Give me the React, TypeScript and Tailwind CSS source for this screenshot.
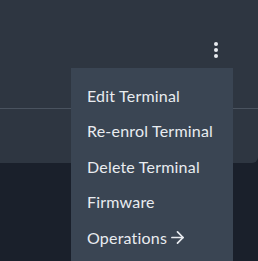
import { ArrowRight } from "lucide-react";

const items = ["Edit Terminal", "Re-enrol Terminal", "Delete Terminal", "Firmware"];

export default function App() {
  return (
    <div className="relative w-[258px] h-[261px] overflow-hidden bg-[#1a202b] font-['Lato',sans-serif]">
      <div className="h-[163px] bg-[#2e3641] rounded-br-md">
        <div className="h-[108px] flex justify-end items-start pt-[42px] pr-[40px]">
          <button className="flex flex-col gap-[2px] items-center">
            <span className="w-[4px] h-[4px] rounded-full bg-[#e8ebef]" />
            <span className="w-[4px] h-[4px] rounded-full bg-[#e8ebef]" />
            <span className="w-[4px] h-[4px] rounded-full bg-[#e8ebef]" />
          </button>
        </div>
        <div className="h-px bg-[#4a535f]" />
      </div>

      <div className="absolute left-[71px] top-[68px] w-[162px] h-[200px] bg-[#3a4553] pt-[10px]">
        <ul className="flex flex-col">
          {items.map((item) => (
            <li key={item} className="h-[35.5px] pl-[16px] flex items-center text-[16px] tracking-[0.2px] text-[#e9ecf0]">
              {item}
            </li>
          ))}
          <li className="h-[35.5px] pl-[16px] flex items-center text-[16px] tracking-[0.2px] text-[#e9ecf0]">
            Operations
            <ArrowRight size={19} strokeWidth={2.2} className="ml-[1px]" />
          </li>
        </ul>
      </div>
    </div>
  );
}
